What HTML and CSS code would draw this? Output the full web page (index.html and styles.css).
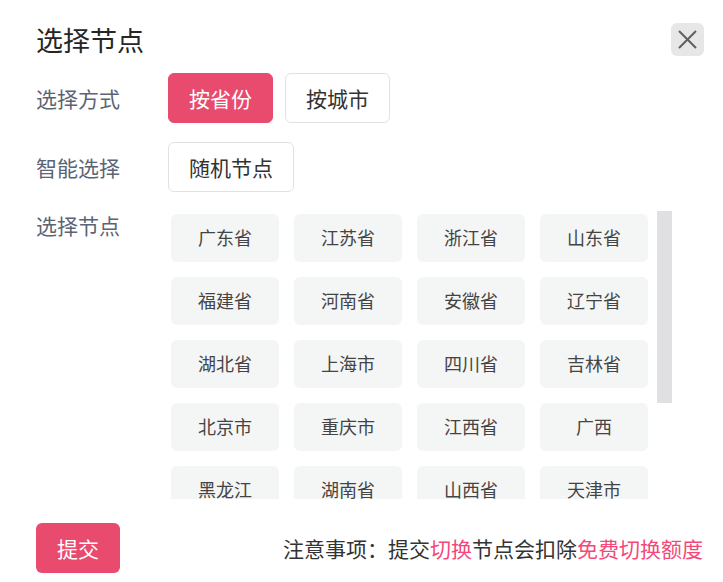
FILE: index.html
```html
<!DOCTYPE html>
<html lang="zh-CN">
<head>
<meta charset="utf-8">
<title>选择节点</title>
<link rel="stylesheet" href="styles.css">
</head>
<body>
<div class="dialog">
  <div class="header">
    <h1 class="title">选择节点</h1>
    <button class="close" aria-label="关闭">
      <svg width="19" height="19" viewBox="0 0 19 19"><path d="M1 1L18 18M18 1L1 18" stroke="#5f5f5f" stroke-width="2" fill="none"/></svg>
    </button>
  </div>
  <div class="row">
    <div class="label">选择方式</div>
    <div class="controls">
      <button class="btn active">按省份</button>
      <button class="btn">按城市</button>
    </div>
  </div>
  <div class="row">
    <div class="label">智能选择</div>
    <div class="controls">
      <button class="btn">随机节点</button>
    </div>
  </div>
  <div class="row row-top">
    <div class="label">选择节点</div>
    <div class="scroll-wrap">
      <div class="scroll">
        <div class="grid">
          <div class="cell">广东省</div><div class="cell">江苏省</div><div class="cell">浙江省</div><div class="cell">山东省</div>
          <div class="cell">福建省</div><div class="cell">河南省</div><div class="cell">安徽省</div><div class="cell">辽宁省</div>
          <div class="cell">湖北省</div><div class="cell">上海市</div><div class="cell">四川省</div><div class="cell">吉林省</div>
          <div class="cell">北京市</div><div class="cell">重庆市</div><div class="cell">江西省</div><div class="cell">广西</div>
          <div class="cell">黑龙江</div><div class="cell">湖南省</div><div class="cell">山西省</div><div class="cell">天津市</div>
          <div class="cell">河北省</div><div class="cell">云南省</div><div class="cell">陕西省</div><div class="cell">贵州省</div>
          <div class="cell">内蒙古</div><div class="cell">甘肃省</div><div class="cell">海南省</div><div class="cell">新疆</div>
        </div>
      </div>
      <div class="thumb"></div>
    </div>
  </div>
  <div class="footer">
    <button class="submit">提交</button>
    <div class="note">注意事项：提交<span class="hl">切换</span>节点会扣除<span class="hl">免费切换额度</span></div>
  </div>
</div>
</body>
</html>
```
FILE: styles.css
```css
html, body {
  margin: 0;
  padding: 0;
  background: #ffffff;
}
body {
  font-family: "Noto Sans CJK SC", "Noto Sans", sans-serif;
}
.dialog {
  width: 723px;
  height: 582px;
  box-sizing: border-box;
  padding: 23px 18px 0 36px;
  display: flex;
  flex-direction: column;
}
.header {
  display: flex;
  align-items: center;
  justify-content: space-between;
  height: 33px;
}
.title {
  margin: 0;
  font-size: 27px;
  font-weight: 400;
  color: #262626;
  line-height: 33px;
}
.close {
  width: 33px;
  height: 33px;
  border: none;
  border-radius: 6px;
  background: #e7e7e7;
  padding: 0;
  display: flex;
  align-items: center;
  justify-content: center;
  margin-right: 1px;
}
.row {
  display: flex;
  align-items: center;
  margin-top: 19px;
}
.header + .row { margin-top: 17px; }
.row-top { align-items: flex-start; }
.label {
  width: 132px;
  flex: none;
  font-size: 21px;
  line-height: 30px;
  color: #5b6475;
}
.row-top .label { line-height: 28px; }
.controls {
  display: flex;
  gap: 12px;
}
.btn {
  height: 50px;
  padding: 0 20px;
  border: 1px solid #e0e2e6;
  border-radius: 6px;
  background: #ffffff;
  color: #333333;
  font-family: inherit;
  font-size: 21px;
  line-height: 1;
}
.btn.active {
  background: #e84b6d;
  border-color: #e84b6d;
  color: #ffffff;
}
.scroll-wrap {
  position: relative;
  width: 504px;
  height: 288px;
}
.scroll {
  width: 100%;
  height: 100%;
  overflow: hidden;
  box-sizing: border-box;
  padding: 3px 0 3px 3px;
}
.thumb {
  position: absolute;
  top: 0;
  right: 0;
  width: 15px;
  height: 192px;
  background: #e0e0e2;
}
.grid {
  display: grid;
  grid-template-columns: repeat(4, 108px);
  grid-auto-rows: 48px;
  gap: 15px;
}
.cell {
  background: #f4f5f5;
  border-radius: 6px;
  display: flex;
  align-items: center;
  justify-content: center;
  padding-bottom: 3px;
  box-sizing: border-box;
  font-size: 18px;
  color: #444444;
}
.footer {
  display: flex;
  align-items: center;
  justify-content: space-between;
  margin-top: 24px;
}
.submit {
  width: 84px;
  height: 50px;
  border: none;
  border-radius: 6px;
  background: #e84b6d;
  color: #ffffff;
  font-family: inherit;
  font-size: 21px;
  padding: 0;
}
.note {
  font-size: 21px;
  color: #333333;
  margin-right: 2px;
}
.hl {
  color: #f4487a;
}
```
